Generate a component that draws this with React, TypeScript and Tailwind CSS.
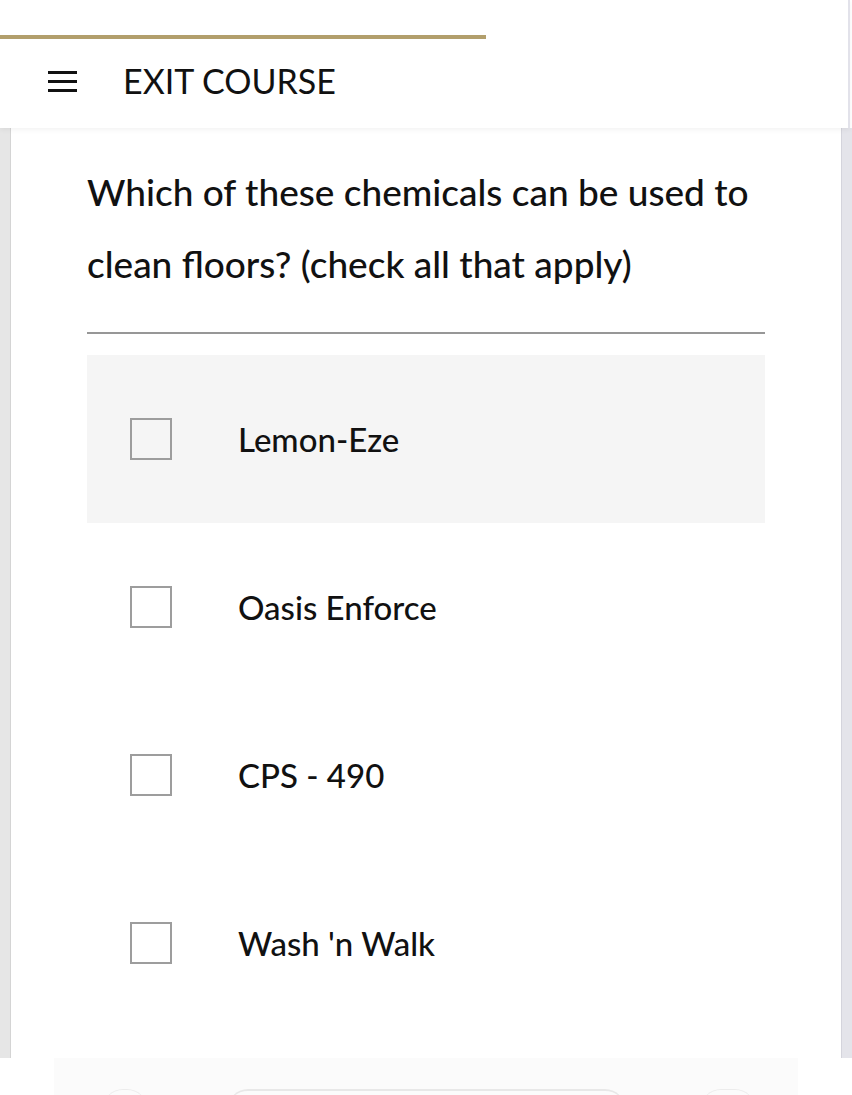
import React from "react";

const options = ["Lemon-Eze", "Oasis Enforce", "CPS - 490", "Wash 'n Walk"];

function Hamburger() {
  return (
    <div className="flex w-[29px] flex-col gap-[6px]">
      <span className="block h-[3px] w-full bg-[#111]" />
      <span className="block h-[3px] w-full bg-[#111]" />
      <span className="block h-[3px] w-full bg-[#111]" />
    </div>
  );
}

function Option({ label, active }: { label: string; active?: boolean }) {
  return (
    <div
      className={
        "flex h-[168px] items-center pl-[43px] " + (active ? "bg-[#f5f5f5]" : "bg-white")
      }
    >
      <span className="block h-[42px] w-[42px] shrink-0 border-2 border-[#9d9d9d]" />
      <span className="ml-[66px] text-[33px] font-medium leading-[40px] text-[#111]">{label}</span>
    </div>
  );
}

export default function App() {
  return (
    <div className="relative flex h-[1095px] w-[852px] flex-col overflow-hidden bg-white font-['Lato',sans-serif]">
      {/* header */}
      <div className="relative z-10 mr-[2px] flex h-[128px] shrink-0 flex-col border-r-2 border-[#e2e2ea] bg-white shadow-[0_2px_5px_rgba(0,0,0,0.05)]">
        <div className="mt-[35px] h-[4px] w-[486px] bg-[#b29f6c]" />
        <div className="mt-[22px] flex items-center pl-[48px]">
          <Hamburger />
          <span className="ml-[46px] text-[34px] leading-[40px] text-[#111]">EXIT COURSE</span>
        </div>
      </div>

      {/* card */}
      <div className="flex h-[930px] shrink-0">
        <div className="w-[11px] shrink-0 border-r border-[#d4d4d4] bg-[#e6e6e6]" />
        <div className="flex flex-1 flex-col px-[76px] pt-[28px]">
          <p className="whitespace-nowrap text-[37px] font-medium leading-[72px] text-[#111]">
            Which of these chemicals can be used to
            <br />
            clean floors? (check all that apply)
          </p>
          <div className="mt-[32px] h-[2px] bg-[#979797]" />
          <div className="mt-[21px] flex flex-col">
            {options.map((o, i) => (
              <Option key={o} label={o} active={i === 0} />
            ))}
          </div>
        </div>
        <div className="w-[11px] shrink-0 border-l border-[#d4d4dc] bg-[#e4e4ea]" />
      </div>

      {/* faded bottom nav */}
      <div className="flex flex-1 bg-white px-[54px]">
        <div className="flex flex-1 items-start bg-[#fbfbfb] pt-[31px]">
          <div className="ml-[49px] h-[20px] w-[44px] rounded-t-full border-t border-[#ececec]" />
          <div className="ml-[81px] h-[20px] w-[397px] rounded-t-[28px] border-t-2 border-[#e8e8e8]" />
          <div className="ml-[76px] h-[20px] w-[54px] rounded-t-full border-t border-[#ececec]" />
        </div>
      </div>
    </div>
  );
}
